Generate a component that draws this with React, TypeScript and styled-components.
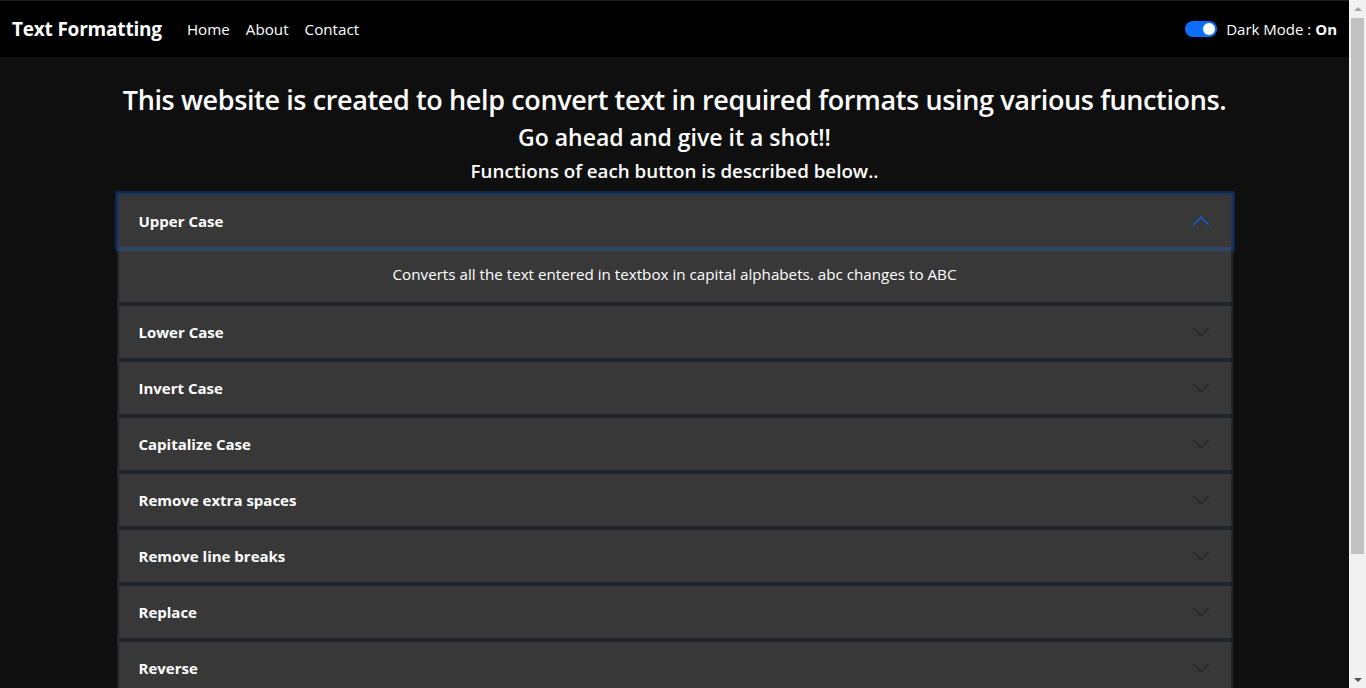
import React from 'react';
import styled, { createGlobalStyle } from 'styled-components';

const functions = [
  { name: 'Upper Case', text: 'Converts all the text entered in textbox in capital alphabets. abc changes to ABC' },
  { name: 'Lower Case', text: 'Converts all the text entered in textbox in small alphabets. ABC changes to abc' },
  { name: 'Invert Case', text: 'Inverts the case of every alphabet. aBc changes to AbC' },
  { name: 'Capitalize Case', text: 'Capitalizes the first alphabet of every word.' },
  { name: 'Remove extra spaces', text: 'Removes all the extra spaces between words.' },
  { name: 'Remove line breaks', text: 'Joins all the lines of the text into one.' },
  { name: 'Replace', text: 'Replaces a word with another word.' },
  { name: 'Reverse', text: 'Reverses the whole text.' },
  { name: 'Copy Text', text: 'Copies the text to clipboard.' },
  { name: 'Clear Text', text: 'Clears the textbox.' },
];

const GlobalStyle = createGlobalStyle`
  body {
    margin: 0;
    overflow: hidden;
    background-color: #0f0f0f;
    color: #fff;
    font-family: 'Open Sans', 'Noto Sans', sans-serif;
    font-size: 16px;
    line-height: 1.5;
  }
`;

const Page = styled.div`
  display: flex;
  height: 688px;
  background-color: #0f0f0f;
`;

const Content = styled.div`
  flex: 1;
  min-width: 0;
  overflow: hidden;
`;

// windows style scrollbar, drawn since the browser hides its own
const ScrollBar = styled.div`
  display: flex;
  flex-direction: column;
  flex: 0 0 17px;
  background-color: #f1f1f1;
`;

const ScrollButton = styled.div<{ $down?: boolean }>`
  display: flex;
  align-items: center;
  justify-content: center;
  height: 17px;

  &::before {
    content: '';
    width: 0;
    height: 0;
    border-left: 4px solid transparent;
    border-right: 4px solid transparent;
    ${({ $down }) =>
      $down ? 'border-top: 4px solid #505050;' : 'border-bottom: 4px solid #a3a3a3;'}
  }
`;

const Track = styled.div`
  flex: 1;
  padding: 1px 2px 0;
`;

const Thumb = styled.div`
  height: 536px;
  background-color: #c1c1c1;
`;

const NavBar = styled.nav`
  display: flex;
  align-items: center;
  justify-content: space-between;
  height: 56px;
  padding: 0 12px;
  background-color: #000;
  border-top: 1px solid #1f2023;
`;

const NavLeft = styled.div`
  display: flex;
  align-items: center;
`;

const Brand = styled.a`
  margin-right: 25px;
  color: #fff;
  font-size: 19px;
  font-weight: 700;
  letter-spacing: -0.2px;
  text-decoration: none;
`;

const NavLink = styled.a`
  margin-right: 16px;
  color: #fff;
  font-size: 15.2px;
  text-decoration: none;
`;

const SwitchRow = styled.label`
  display: flex;
  align-items: center;
  gap: 9px;
  font-size: 15px;

  b {
    font-weight: 700;
  }
`;

const Switch = styled.span<{ $on: boolean }>`
  position: relative;
  width: 32px;
  height: 16px;
  border-radius: 8px;
  background-color: ${({ $on }) => ($on ? '#0d6efd' : '#444')};

  &::after {
    content: '';
    position: absolute;
    top: 2px;
    left: ${({ $on }) => ($on ? '18px' : '2px')};
    width: 12px;
    height: 12px;
    border-radius: 50%;
    background-color: #fff;
  }
`;

const Container = styled.main`
  width: 1116px;
  margin: 0 auto;
  padding: 27px 0 32px;
`;

const Title = styled.h3<{ $size: number; $spacing?: number }>`
  margin: 0 0 8px;
  font-size: ${({ $size }) => $size}px;
  font-weight: 600;
  letter-spacing: ${({ $spacing = 0 }) => $spacing}px;
  line-height: 1.2;
  text-align: center;
  white-space: nowrap;
`;

const Accordion = styled.div`
  margin-top: 11px;
`;

const Item = styled.div`
  border: 2px solid #212529;
  background-color: #383838;
`;

const Header = styled.button<{ $open: boolean }>`
  position: relative;
  z-index: ${({ $open }) => ($open ? 3 : 1)};
  display: flex;
  align-items: center;
  justify-content: space-between;
  width: 100%;
  height: 52px;
  padding: 0 20px;
  border: 0;
  background-color: #383838;
  color: #fff;
  font-family: inherit;
  font-size: 15px;
  font-weight: 700;
  text-align: left;
  box-shadow: ${({ $open }) => ($open ? '0 0 0 4px rgba(13, 110, 253, 0.25)' : 'none')};

  svg {
    width: 20px;
    height: 20px;
    fill: ${({ $open }) => ($open ? '#0c63e4' : '#212529')};
    transform: ${({ $open }) => ($open ? 'rotate(180deg)' : 'none')};
  }
`;

const Body = styled.div`
  padding: 16px 20px;
  font-size: 15.2px;
  text-align: center;
`;

const Chevron = () => (
  <svg viewBox="0 0 16 16">
    <path
      fillRule="evenodd"
      d="M1.646 4.646a.5.5 0 0 1 .708 0L8 10.293l5.646-5.647a.5.5 0 0 1 .708.708l-6 6a.5.5 0 0 1-.708 0l-6-6a.5.5 0 0 1 0-.708z"
    />
  </svg>
);

const App = (): JSX.Element => {
  const [open, setOpen] = React.useState(0);

  return (
    <Page>
      <GlobalStyle />
      <Content>
        <NavBar>
          <NavLeft>
            <Brand href="#">Text Formatting</Brand>
            <NavLink href="#">Home</NavLink>
            <NavLink href="#">About</NavLink>
            <NavLink href="#">Contact</NavLink>
          </NavLeft>
          <SwitchRow>
            <Switch $on />
            <span>
              Dark Mode : <b>On</b>
            </span>
          </SwitchRow>
        </NavBar>
        <Container>
          <Title $size={27} $spacing={-0.38}>
            This website is created to help convert text in required formats using various functions.
          </Title>
          <Title $size={23}>Go ahead and give it a shot!!</Title>
          <Title $size={18.75}>Functions of each button is described below..</Title>
          <Accordion>
            {functions.map((f, i) => (
              <Item key={f.name}>
                <Header $open={open === i} onClick={() => setOpen(open === i ? -1 : i)}>
                  {f.name}
                  <Chevron />
                </Header>
                {open === i && <Body>{f.text}</Body>}
              </Item>
            ))}
          </Accordion>
        </Container>
      </Content>
      <ScrollBar>
        <ScrollButton />
        <Track>
          <Thumb />
        </Track>
        <ScrollButton $down />
      </ScrollBar>
    </Page>
  );
};

export default App;
